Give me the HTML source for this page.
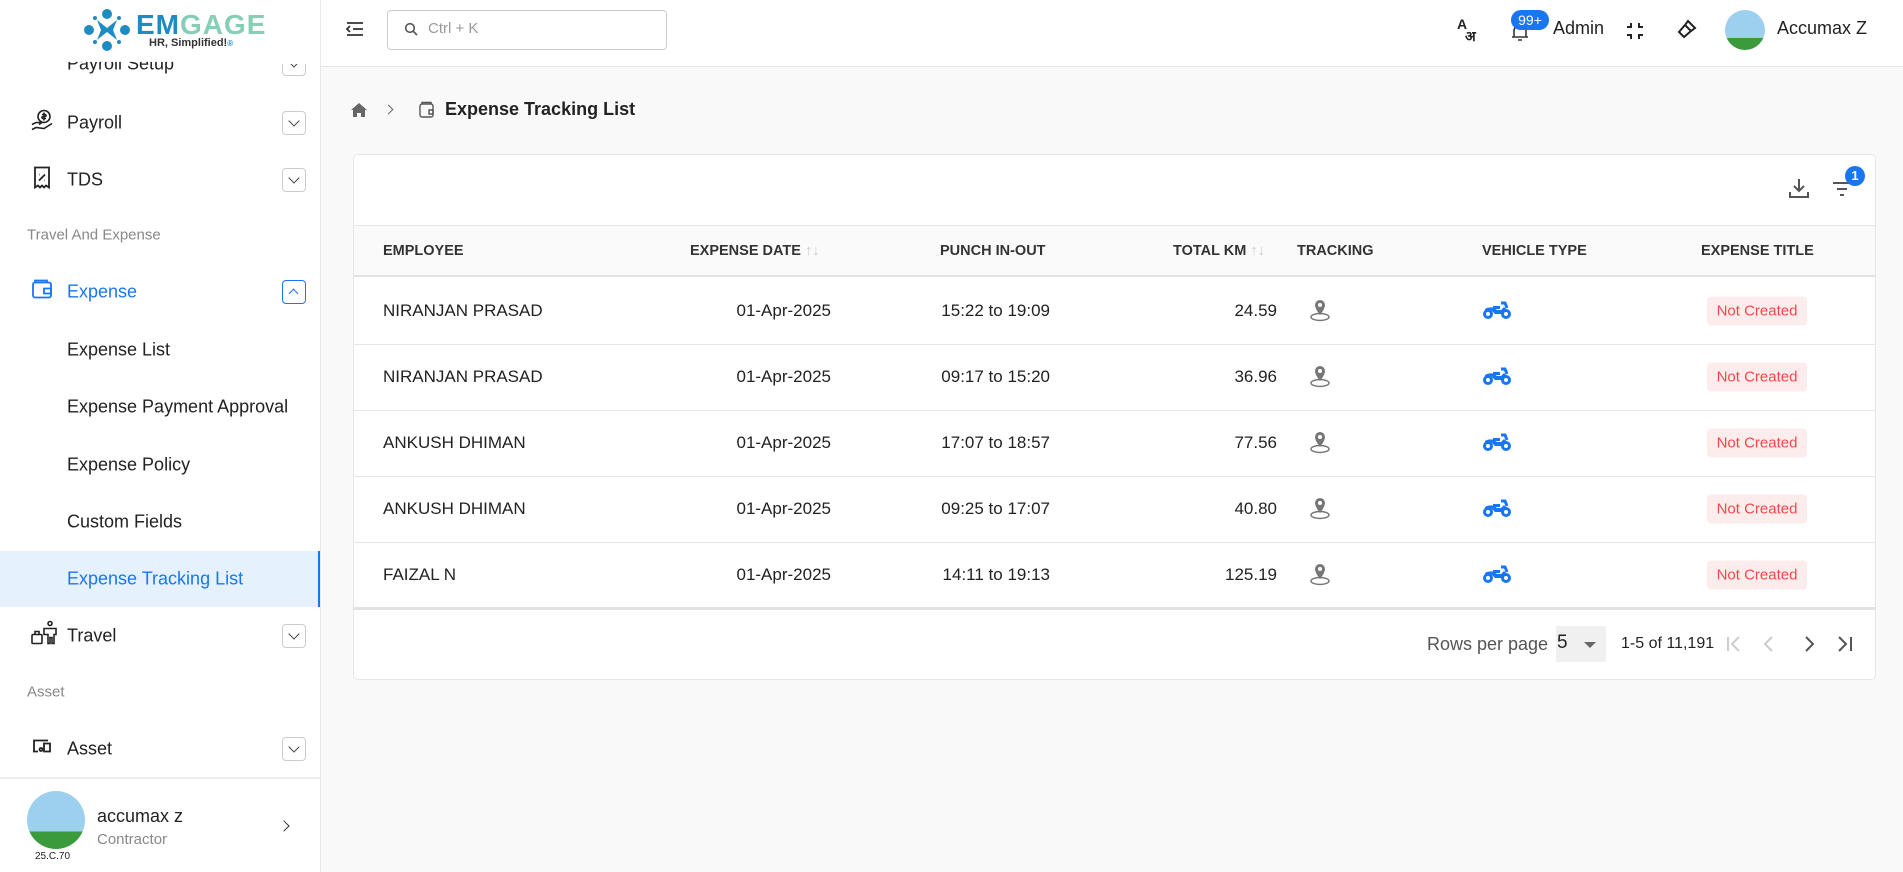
<!DOCTYPE html>
<html><head><meta charset="utf-8"><style>
*{box-sizing:border-box;margin:0;padding:0}
body{width:1903px;height:872px;overflow:hidden;background:#f9f9f9;font-family:"Liberation Sans",sans-serif;color:#222;position:relative}
.a{position:absolute}
.sb{left:0;top:0;width:321px;height:872px;background:#fff;border-right:1px solid #e8e8e8}
.mi{position:absolute;left:67px;font-size:18px;color:#222;transform:translateY(-50%)}
.ic{position:absolute;left:30px;transform:translateY(-50%)}
.chev{position:absolute;left:282px;width:24px;height:24px;border:1px solid #ccc;border-radius:4px;transform:translateY(-50%)}
.chev:after{content:"";position:absolute;left:7px;top:5px;width:7px;height:7px;border-right:1.5px solid #444;border-bottom:1.5px solid #444;transform:rotate(45deg)}
.chev.up:after{display:none}
.lbl{position:absolute;left:27px;font-size:15px;color:#888;transform:translateY(-50%)}
.th{position:absolute;top:251px;font-size:14.5px;font-weight:bold;color:#333;transform:translateY(-50%)}
.td{position:absolute;font-size:17px;color:#222;transform:translateY(-50%)}
.r{text-align:right}
.badge{position:absolute;left:1707px;width:100px;height:29px;background:#fdecec;color:#f0484d;font-size:15px;line-height:29px;text-align:center;border-radius:4px;transform:translateY(-50%)}
.row{position:absolute;left:353px;width:1523px;height:1px;background:#e6e6e6}
</style></head><body>
<div class="a sb">
  <div class="a" style="left:83px;top:8px">
    <svg width="48" height="44" viewBox="0 0 48 44"><g fill="#1e8bc3"><circle cx="24" cy="6" r="5"/><circle cx="24" cy="38" r="5"/><circle cx="6" cy="22" r="5"/><circle cx="42" cy="22" r="5"/><path d="M14 12 L24 20 L34 12 L30 22 L34 32 L24 24 L14 32 L18 22Z"/><circle cx="12" cy="10" r="2"/><circle cx="36" cy="10" r="2"/><circle cx="12" cy="34" r="2"/><circle cx="36" cy="34" r="2"/></g></svg>
  </div>
  <div class="a" style="left:136px;top:9px;font-size:28px;font-weight:bold;letter-spacing:1px"><span style="color:#1e8bc3">EM</span><span style="color:#86cfb5">GAGE</span></div>
  <div class="a" style="left:149px;top:37px;font-size:11px;font-weight:bold;color:#333">HR, Simplified!<span style="color:#1e8bc3;font-size:8px">®</span></div>

  <div class="mi" style="top:64px;clip-path:inset(40% 0 0 0)">Payroll Setup</div>
  <div class="chev" style="top:64px;clip-path:inset(50% 0 0 0)"></div>
  <div class="ic" style="top:123px"><svg width="24" height="24" viewBox="0 0 24 24" fill="none" stroke="#222" stroke-width="1.6"><circle cx="14" cy="8" r="6"/><path d="M14 4v8M12 6h3a1 1 0 010 2h-2a1 1 0 000 2h3"/><path d="M2 16l4-2h6l-3 2M2 21l4-2 8 1 8-5"/></svg></div>
  <div class="mi" style="top:123px">Payroll</div><div class="chev" style="top:123px"></div>
  <div class="ic" style="top:180px"><svg width="24" height="24" viewBox="0 0 24 24" fill="none" stroke="#222" stroke-width="1.8"><path d="M5 2h14v20l-3-2-2 2-2-2-2 2-2-2-3 2z"/><path d="M9 15l6-6M9 9h.5M14.5 15h.5"/></svg></div>
  <div class="mi" style="top:180px">TDS</div><div class="chev" style="top:180px"></div>
  <div class="lbl" style="top:235px">Travel And Expense</div>
  <div class="ic" style="top:292px"><svg width="24" height="24" viewBox="0 0 24 24" fill="none" stroke="#1976f2" stroke-width="1.8"><rect x="3" y="5" width="18" height="15" rx="2"/><path d="M5 5V3h12v2M14 11h7v5h-7z"/></svg></div>
  <div class="mi" style="top:292px;color:#1976f2">Expense</div>
  <div class="chev up" style="top:292px;border-color:#1976f2"><span class="a" style="left:7px;top:9px;width:7px;height:7px;border-left:1.5px solid #1976f2;border-top:1.5px solid #1976f2;transform:rotate(45deg)"></span></div>
  <div class="mi" style="top:350px">Expense List</div>
  <div class="mi" style="top:407px">Expense Payment Approval</div>
  <div class="mi" style="top:465px">Expense Policy</div>
  <div class="mi" style="top:522px">Custom Fields</div>
  <div class="a" style="left:0;top:551px;width:320px;height:56px;background:#e5f1fd;border-right:2px solid #1976f2"></div>
  <div class="mi" style="top:579px;color:#1976f2">Expense Tracking List</div>
  <div class="ic" style="top:636px"><svg width="28" height="26" viewBox="0 0 28 26" fill="none" stroke="#222" stroke-width="1.6"><rect x="2" y="14" width="10" height="9" rx="1"/><path d="M5 14v-3h4v3"/><circle cx="20" cy="3" r="2"/><path d="M14 8h12v6h-2v9h-2v-6h-2v6h-2v-9h-4z"/></svg></div>
  <div class="mi" style="top:636px">Travel</div><div class="chev" style="top:636px"></div>
  <div class="lbl" style="top:692px">Asset</div>
  <div class="ic" style="top:749px"><svg width="24" height="24" viewBox="0 0 24 24" fill="none" stroke="#222" stroke-width="1.8"><path d="M4 17V6h14M8 17H3M14 9h6v8h-6z"/><circle cx="11" cy="15" r="1.5"/></svg></div>
  <div class="mi" style="top:749px">Asset</div><div class="chev" style="top:749px"></div>
  <div class="a" style="left:0;top:777px;width:320px;height:2px;background:#eee"></div>
  <div class="a" style="left:27px;top:791px;width:58px;height:58px;border-radius:50%;background:linear-gradient(#9dd0ef 70%,#3a9a3c 70%)"></div>
  <div class="a" style="left:35px;top:851px;font-size:10px">25.C.70</div>
  <div class="a" style="left:97px;top:806px;font-size:18px">accumax z</div>
  <div class="a" style="left:97px;top:831px;font-size:15px;color:#888">Contractor</div>
  <div class="a" style="left:280px;top:822px;width:8px;height:8px;border-right:1.5px solid #333;border-top:1.5px solid #333;transform:rotate(45deg)"></div>
</div>

<div class="a" style="left:321px;top:0;width:1582px;height:67px;background:#fff;border-bottom:1px solid #e8e8e8"></div>
<div class="a" style="left:345px;top:20px"><svg width="20" height="18" viewBox="0 0 20 18" stroke="#333" stroke-width="1.8" fill="none"><path d="M2 3h16M8 9h10M2 15h16M5 6l-3 3 3 3"/></svg></div>
<div class="a" style="left:387px;top:10px;width:280px;height:40px;border:1px solid #ccc;border-radius:4px;background:#fff"></div>
<div class="a" style="left:404px;top:22px"><svg width="14" height="14" viewBox="0 0 14 14" fill="none" stroke="#555" stroke-width="1.6"><circle cx="6" cy="6" r="4.3"/><path d="M9 9l4 4"/></svg></div>
<div class="a" style="left:428px;top:20px;font-size:15px;color:#999">Ctrl + K</div>
<div class="a" style="left:1457px;top:18px;font-size:14px;font-weight:bold;line-height:12px">A<br><span style="margin-left:8px">अ</span></div>
<div class="a" style="left:1510px;top:22px"><svg width="20" height="20" viewBox="0 0 20 20" fill="none" stroke="#333" stroke-width="1.6"><path d="M4 15V9a6 6 0 0112 0v6zM2 15h16M8 18h4"/></svg></div>
<div class="a" style="left:1511px;top:10px;width:38px;height:20px;border-radius:10px;background:#1976f2;color:#fff;font-size:14px;line-height:20px;text-align:center">99+</div>
<div class="a" style="left:1553px;top:18px;font-size:18px">Admin</div>
<div class="a" style="left:1626px;top:22px"><svg width="18" height="18" viewBox="0 0 18 18" fill="none" stroke="#222" stroke-width="2"><path d="M1 5h4V1M13 1v4h4M1 13h4v4M17 13h-4v4"/></svg></div>
<div class="a" style="left:1676px;top:18px"><svg width="22" height="22" viewBox="0 0 22 22" fill="none" stroke="#222" stroke-width="2"><path d="M12 3l7 7-4 3-6-6zM9 7l-6 7 5 5 7-6"/></svg></div>
<div class="a" style="left:1725px;top:10px;width:40px;height:40px;border-radius:50%;background:linear-gradient(#9dd0ef 70%,#3a9a3c 70%)"></div>
<div class="a" style="left:1777px;top:18px;font-size:18px;font-weight:500">Accumax Z</div>

<div class="a" style="left:350px;top:102px"><svg width="18" height="16" viewBox="0 0 18 16" fill="#666"><path d="M9 1L1 8h2v7h4v-4h4v4h4V8h2z"/></svg></div>
<div class="a" style="left:385px;top:106px;width:7px;height:7px;border-right:1.5px solid #666;border-top:1.5px solid #666;transform:rotate(45deg)"></div>
<div class="a" style="left:418px;top:101px"><svg width="18" height="18" viewBox="0 0 18 18" fill="none" stroke="#555" stroke-width="1.4"><rect x="2" y="3" width="13" height="13" rx="2"/><path d="M4 3V1.5h9V3M11 9h4v4h-4z"/></svg></div>
<div class="a" style="left:445px;top:99px;font-size:18px;font-weight:bold;color:#222">Expense Tracking List</div>

<div class="a" style="left:353px;top:154px;width:1523px;height:526px;background:#fff;border:1px solid #e6e6e6;border-radius:5px"></div>
<div class="a" style="left:1788px;top:177px"><svg width="22" height="22" viewBox="0 0 22 22" fill="none" stroke="#555" stroke-width="2"><path d="M11 2v12M6 9l5 5 5-5M2 15v5h18v-5"/></svg></div>
<div class="a" style="left:1832px;top:180px"><svg width="20" height="18" viewBox="0 0 20 18" stroke="#555" stroke-width="2"><path d="M1 3h18M5 9h10M8 15h4"/></svg></div>
<div class="a" style="left:1845px;top:166px;width:20px;height:20px;border-radius:50%;background:#1976f2;color:#fff;font-size:13px;font-weight:bold;line-height:20px;text-align:center">1</div>
<div class="a" style="left:354px;top:225px;width:1521px;height:52px;background:#fafafa;border-top:1px solid #e6e6e6;border-bottom:2px solid #e2e2e2"></div>
<div class="th" style="left:383px">EMPLOYEE</div>
<div class="th" style="left:690px">EXPENSE DATE <span style="color:#ccc;font-weight:normal">↑↓</span></div>
<div class="th" style="left:940px">PUNCH IN-OUT</div>
<div class="th" style="left:1173px">TOTAL KM <span style="color:#ccc;font-weight:normal">↑↓</span></div>
<div class="th" style="left:1297px">TRACKING</div>
<div class="th" style="left:1482px">VEHICLE TYPE</div>
<div class="th" style="left:1701px">EXPENSE TITLE</div>

<div id="rows"></div>
<script>
var d=[["NIRANJAN PRASAD","15:22 to 19:09","24.59"],["NIRANJAN PRASAD","09:17 to 15:20","36.96"],["ANKUSH DHIMAN","17:07 to 18:57","77.56"],["ANKUSH DHIMAN","09:25 to 17:07","40.80"],["FAIZAL N","14:11 to 19:13","125.19"]];
var h="";
d.forEach(function(r,i){var y=311+i*66;
h+='<div class="td" style="left:383px;top:'+y+'px">'+r[0]+'</div>';
h+='<div class="td r" style="left:631px;width:200px;top:'+y+'px">01-Apr-2025</div>';
h+='<div class="td r" style="left:850px;width:200px;top:'+y+'px">'+r[1]+'</div>';
h+='<div class="td r" style="left:1077px;width:200px;top:'+y+'px">'+r[2]+'</div>';
h+='<div class="a" style="left:1308px;top:'+(y-13)+'px"><svg width="24" height="24" viewBox="0 0 24 24"><path d="M12 2a5 5 0 00-5 5c0 4 5 10 5 10s5-6 5-10a5 5 0 00-5-5z" fill="#777"/><circle cx="12" cy="7" r="2" fill="#fff"/><ellipse cx="12" cy="19" rx="9" ry="3.5" fill="none" stroke="#777" stroke-width="1.5"/></svg></div>';
h+='<div class="a" style="left:1482px;top:'+(y-11)+'px"><svg width="30" height="20" viewBox="0 0 30 20"><g fill="none" stroke="#1976f2" stroke-width="3"><circle cx="6" cy="14" r="3.5"/><circle cx="24" cy="14" r="3.5"/><path d="M19 3h4l2 5"/></g><path d="M3 9c3-2 7-2 9-1l3 2h4l3-3 2 2-4 5H13L9 10H3z" fill="#1976f2"/><path d="M11 6h7v3h-7z" fill="#1976f2"/></svg></div>';
h+='<div class="badge" style="top:'+y+'px">Not Created</div>';
if(i<4)h+='<div class="row" style="top:'+(y+33)+'px"></div>';});
h+='<div class="row" style="top:607px;height:3px;background:#e2e2e2"></div>';
document.getElementById("rows").innerHTML=h;
</script>
<div class="a" style="left:1427px;top:634px;font-size:18px;color:#555">Rows per page</div>
<div class="a" style="left:1556px;top:626px;width:50px;height:36px;background:#f0f0f0"></div>
<div class="a" style="left:1557px;top:632px;font-size:19px">5</div>
<div class="a" style="left:1584px;top:642px;width:0;height:0;border-left:6px solid transparent;border-right:6px solid transparent;border-top:6px solid #666"></div>
<div class="a" style="left:1621px;top:635px;font-size:16px">1-5 of 11,191</div>
<div class="a" style="left:1726px;top:633px"><svg width="150" height="22" viewBox="0 0 150 22" fill="none" stroke-width="2"><path d="M2 4v14M13 4l-7 7 7 7" stroke="#ccc"/><path d="M46 4l-7 7 7 7" stroke="#ccc"/><path d="M80 4l7 7-7 7" stroke="#555"/><path d="M113 4l7 7-7 7M125 4v14" stroke="#555"/></svg></div>
</body></html>
